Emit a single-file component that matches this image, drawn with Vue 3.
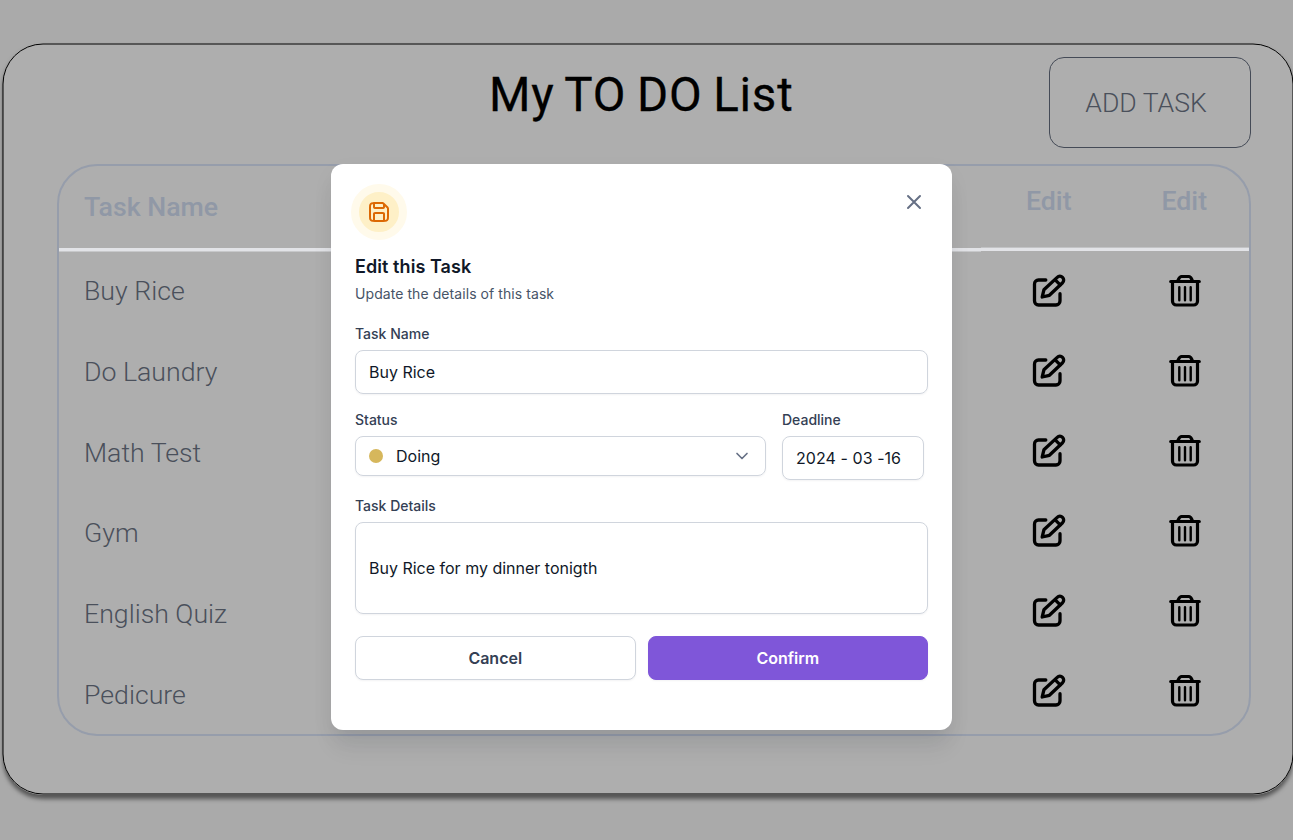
<script setup>
const tasks = ['Buy Rice', 'Do Laundry', 'Math Test', 'Gym', 'English Quiz', 'Pedicure']
</script>

<template>
  <div class="page">
    <main class="board">
      <svg class="frame" width="1293" height="760" fill="none" stroke="#000">
        <rect x="3" y="1" width="1290" height="750" rx="40" />
      </svg>
      <header class="top">
        <h1 class="title">My TO DO List</h1>
        <button class="add">ADD TASK</button>
      </header>

      <section class="table">
        <div class="names">
          <div class="head">Task Name</div>
          <div v-for="task in tasks" :key="task" class="name">{{ task }}</div>
        </div>
        <div class="actions">
          <div class="action-head"><span>Edit</span><span>Edit</span></div>
          <div v-for="task in tasks" :key="task" class="action-row">
            <span class="cell">
              <svg width="36" height="36" viewBox="0 0 36 36" fill="none" stroke="#000" stroke-width="3.3" stroke-linecap="round" stroke-linejoin="round">
                <path d="M14.8 7H7.5a4 4 0 0 0-4 4v17a4 4 0 0 0 4 4h17.5a4 4 0 0 0 4-4v-7.3" />
                <path d="M11.2 24l1.7-7.2L26.2 4.4a3.75 3.75 0 0 1 5.4 5.3L18.4 22.3z" />
                <path d="M24.2 6.8l5 5" />
              </svg>
            </span>
            <span class="cell">
              <svg width="36" height="36" viewBox="0 0 36 36" fill="none" stroke="#000" stroke-linecap="round" stroke-linejoin="round">
                <path stroke-width="3.2" d="M3.7 8.5h28.6M5.5 8.5v19.7a3.8 3.8 0 0 0 3.8 3.8h17.4a3.8 3.8 0 0 0 3.8-3.8V8.5M10.3 8.2c1.4-1 1.6-4.7 4.2-4.7h7.4c2.6 0 2.6 3.7 4 4.7" />
                <path stroke-width="2.4" d="M12.3 14.2v13M18 14.2v13M23.7 14.2v13" />
              </svg>
            </span>
          </div>
        </div>
      </section>
    </main>

    <section class="modal" role="dialog">
      <div class="modal-top">
        <span class="badge">
          <svg width="24" height="24" viewBox="0 0 24 24" fill="none" stroke="#dc6803" stroke-width="2" stroke-linecap="round" stroke-linejoin="round">
            <path d="M7 3v3.4c0 .56 0 .84.11 1.05a1 1 0 0 0 .44.44c.21.11.49.11 1.05.11h6.8c.56 0 .84 0 1.05-.11a1 1 0 0 0 .44-.44C17 7.24 17 6.96 17 6.4V4m0 17v-6.4c0-.56 0-.84-.11-1.05a1 1 0 0 0-.44-.44C16.24 13 15.96 13 15.4 13H8.6c-.56 0-.84 0-1.05.11a1 1 0 0 0-.44.44C7 13.76 7 14.04 7 14.6V21M21 9.33V16.2c0 1.68 0 2.52-.33 3.16a3 3 0 0 1-1.31 1.31c-.64.33-1.48.33-3.16.33H7.8c-1.68 0-2.52 0-3.16-.33a3 3 0 0 1-1.31-1.31C3 18.72 3 17.88 3 16.2V7.8c0-1.68 0-2.52.33-3.16a3 3 0 0 1 1.31-1.31C5.28 3 6.12 3 7.8 3h6.87c.49 0 .74 0 .97.06.2.05.39.13.57.24.2.12.38.29.72.64l3.13 3.13c.35.34.52.52.64.72.11.18.19.37.24.57.06.23.06.48.06.97z" />
          </svg>
        </span>
        <svg class="close" width="24" height="24" viewBox="0 0 24 24" fill="none" stroke="#667085" stroke-width="2" stroke-linecap="round">
          <path d="M18 6L6 18M6 6l12 12" />
        </svg>
      </div>
      <h2 class="heading">Edit this Task</h2>
      <p class="sub">Update the details of this task</p>

      <div class="label">Task Name</div>
      <div class="field">Buy Rice</div>

      <div class="pair">
        <div class="status">
          <div class="label">Status</div>
          <div class="field select">
            <i class="dot"></i><span>Doing</span>
            <svg class="chevron" width="20" height="20" viewBox="0 0 20 20" fill="none" stroke="#667085" stroke-width="1.67" stroke-linecap="round" stroke-linejoin="round">
              <path d="M5 7.5l5 5 5-5" />
            </svg>
          </div>
        </div>
        <div class="deadline">
          <div class="label">Deadline</div>
          <div class="field date">2024 - 03 -16</div>
        </div>
      </div>

      <div class="label">Task Details</div>
      <div class="field details">Buy Rice for my dinner tonigth</div>

      <div class="buttons">
        <button class="btn cancel">Cancel</button>
        <button class="btn confirm">Confirm</button>
      </div>
    </section>
  </div>
</template>

<style>
body { margin: 0; background: #aaaaaa; }
</style>

<style scoped>
.page {
  position: relative;
  box-sizing: border-box;
  width: 1293px;
  height: 840px;
  padding-top: 43px;
  overflow: hidden;
  background: #aaaaaa;
  font-family: Roboto, sans-serif;
}
.board {
  position: relative;
  box-sizing: border-box;
  height: 752px;
  margin-left: 3px;
  padding: 0 43px 0 54px;
  border-radius: 40px;
  background: #aeaeae;
  box-shadow: 0 4px 4px rgba(0, 0, 0, 0.5);
}
.frame { position: absolute; top: 0; left: -3px; }
.top { position: relative; height: 121px; }
.title {
  margin: 0;
  padding: 23px 0 0 432px;
  font-size: 47.5px;
  font-weight: 400;
  line-height: 58px;
  letter-spacing: 0.75px;
  word-spacing: -1.7px;
  -webkit-text-stroke: 0.3px #000;
  white-space: nowrap;
  color: #000;
}
.add {
  position: absolute;
  top: 14px;
  right: -1px;
  width: 202px;
  height: 91px;
  padding: 0 8px 1px 0;
  border: 1px solid #454b57;
  border-radius: 15px;
  background: transparent;
  font: 300 26.6px Roboto, sans-serif;
  color: #4a505b;
}
.table {
  position: relative;
  box-sizing: border-box;
  display: flex;
  width: 1194px;
  height: 572px;
  border: 2px solid #969dab;
  border-radius: 40px;
}
.names { flex: none; width: 922px; }
.head {
  height: 86px;
  padding-left: 25px;
  font-size: 26.7px;
  font-weight: 500;
  line-height: 83px;
  color: #9098a6;
  background: linear-gradient(#e2e3e7 3px, #c7c8ca 3px) 0 100% / 100% 4px no-repeat;
}
.name {
  height: 80.8px;
  padding-left: 25px;
  font-size: 26.7px;
  font-weight: 300;
  line-height: 79.4px;
  color: #4a505b;
}
.actions { flex: 1; min-width: 0; }
.action-head {
  display: flex;
  height: 85px;
  font-size: 26.7px;
  font-weight: 500;
  line-height: 70px;
  color: #9098a6;
  background: linear-gradient(#c2c3c5 1px, #e2e3e7 1px) 0 100% / 100% 4px no-repeat;
}
.action-head span { flex: none; width: 135.5px; text-align: center; }
.action-row { display: flex; height: 80px; }
.cell { display: flex; flex: none; justify-content: center; align-items: center; width: 136px; height: 80px; }

.modal {
  position: absolute;
  top: 164px;
  left: 331px;
  box-sizing: border-box;
  width: 621px;
  height: 566px;
  padding: 20px 24px;
  border-radius: 12px;
  background: #fff;
  box-shadow: 0 20px 24px -4px rgba(16, 24, 40, 0.08), 0 8px 8px -4px rgba(16, 24, 40, 0.03), 0 8px 24px rgba(16, 24, 40, 0.04);
  font-family: Inter, sans-serif;
  color: #101828;
}
.modal-top { display: flex; justify-content: space-between; height: 71px; }
.badge {
  box-sizing: border-box;
  display: flex;
  align-items: center;
  justify-content: center;
  width: 56px;
  height: 56px;
  margin-left: -4px;
  border: 8px solid #fffaeb;
  border-radius: 50%;
  background: #fef0c7;
}
.close { margin: 6px 2px 0 0; }
.heading { margin: 0; font-size: 18px; font-weight: 600; line-height: 24px; letter-spacing: 0.07px; }
.sub { margin: 5px 0 20px; font-size: 14px; line-height: 20px; letter-spacing: 0.07px; color: #475467; }
.label { margin-bottom: 6px; font-size: 14px; font-weight: 500; line-height: 20px; color: #344054; }
.field {
  box-sizing: border-box;
  display: flex;
  align-items: center;
  height: 44px;
  padding: 0 13px;
  border: 1px solid #d0d5dd;
  border-radius: 8px;
  box-shadow: 0 1px 2px rgba(16, 24, 40, 0.05);
  font-size: 16px;
}
.pair { display: flex; gap: 16px; margin: 16px 0; }
.status { width: 411px; }
.deadline { width: 142px; }
.date { letter-spacing: 0.06px; }
.select { height: 40px; }
.dot { width: 14px; height: 14px; margin-right: 13px; border-radius: 50%; background: #d6b75c; }
.chevron { margin-left: auto; }
.details { height: 92px; }
.buttons { display: flex; gap: 12px; margin-top: 22px; }
.btn {
  flex: 1;
  height: 44px;
  border-radius: 8px;
  box-shadow: 0 1px 2px rgba(16, 24, 40, 0.05);
  font: 600 16px Inter, sans-serif;
}
.cancel { border: 1px solid #d0d5dd; background: #fff; color: #344054; }
.confirm { border: 1px solid #7f56d9; background: #7f56d9; color: #fff; }
</style>
